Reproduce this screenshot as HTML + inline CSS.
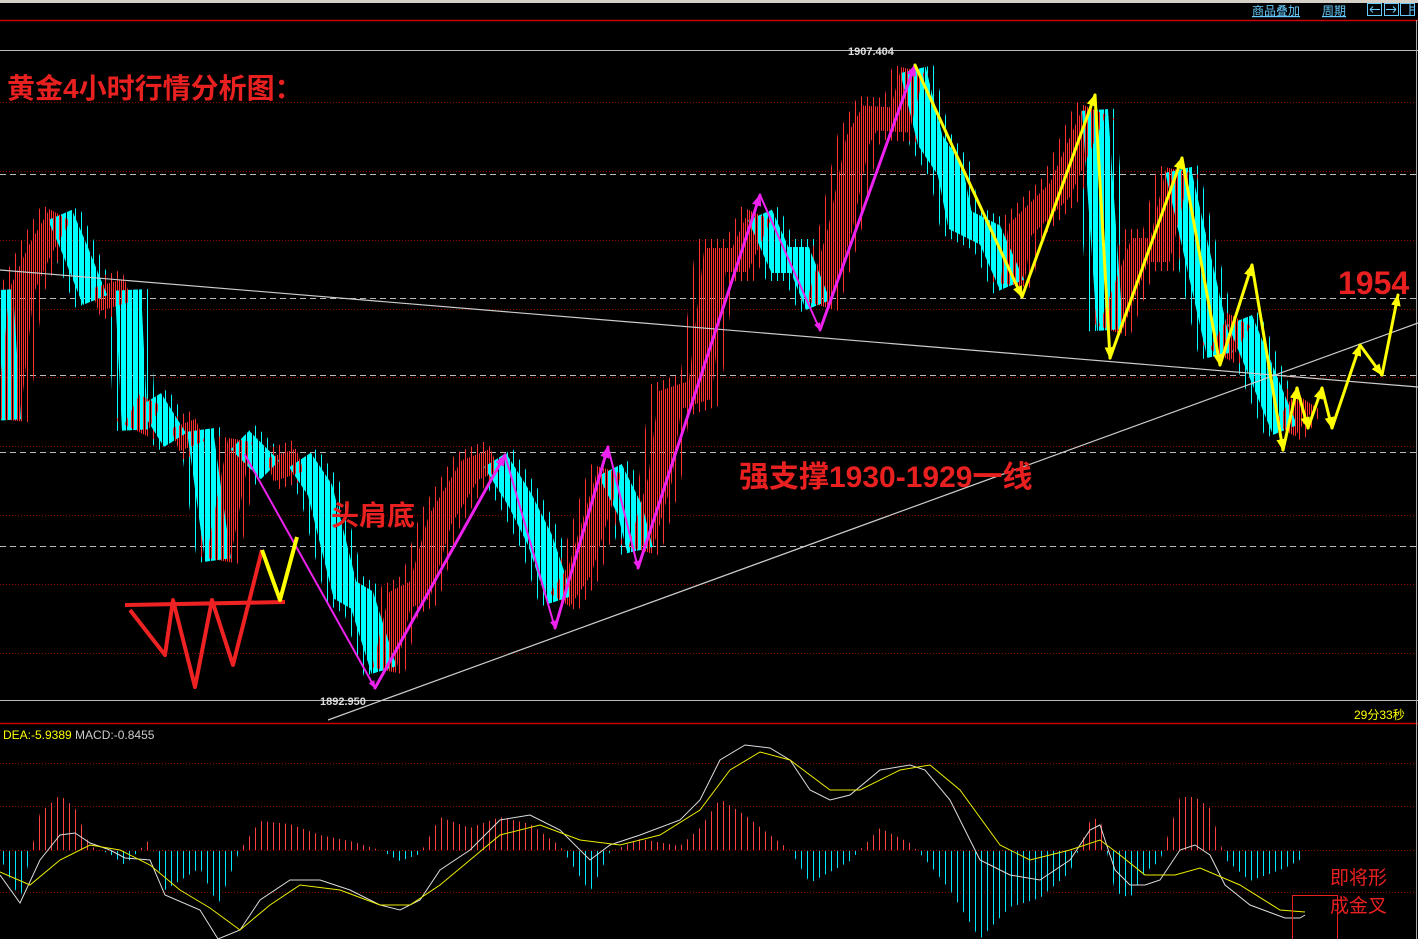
<!DOCTYPE html>
<html><head><meta charset="utf-8"><style>
html,body{margin:0;padding:0;background:#000;width:1418px;height:939px;overflow:hidden}
svg{display:block}
text{font-family:"Liberation Sans","Noto Sans CJK SC",sans-serif}
</style></head><body>
<svg width="1418" height="939" xmlns="http://www.w3.org/2000/svg">
<defs>
<pattern id="cyB" patternUnits="userSpaceOnUse" x="1" y="0" width="6" height="4"><rect x="0" y="0" width="5" height="4" fill="#00ffff"/></pattern>
<pattern id="cyW" patternUnits="userSpaceOnUse" x="1" y="0" width="6" height="4"><rect x="2" y="0" width="1" height="4" fill="#00ffff"/></pattern>
<pattern id="rdB" patternUnits="userSpaceOnUse" x="1" y="0" width="6" height="4"><rect x="0" y="0" width="1" height="4" fill="#ff3030"/><rect x="4" y="0" width="1" height="4" fill="#ff3030"/></pattern>
<pattern id="rdW" patternUnits="userSpaceOnUse" x="1" y="0" width="6" height="4"><rect x="2" y="0" width="1" height="4" fill="#ff3030"/></pattern>
<pattern id="hR" patternUnits="userSpaceOnUse" x="3" y="0" width="6" height="4"><rect x="0" y="0" width="1" height="4" fill="#ff4040"/></pattern>
<pattern id="hC" patternUnits="userSpaceOnUse" x="3" y="0" width="6" height="4"><rect x="0" y="0" width="1" height="4" fill="#00e5ff"/></pattern>
<clipPath id="up"><rect x="0" y="724" width="1418" height="126"/></clipPath>
<clipPath id="dn"><rect x="0" y="851" width="1418" height="90"/></clipPath>
<path id="cyP" fill="none" d="M0 290L8 420 M60 215L75 250L95 300 M128 290L135 430 M150 400L175 440 M200 430L218 560 M240 440L270 470 M300 460L320 490L345 590L362 600L384 670 M495 460L520 500L540 540L560 600 M610 470L630 510L640 550 M760 215L780 260L800 260L818 305 M913 70L930 140L950 170L960 220L990 235L1012 285 M1095 110L1110 330 M1178 170L1220 355 M1240 320L1285 430"/>
<path id="rdP" fill="none" d="M8 420L22 290L40 250L60 215 M95 300L128 290 M135 430L150 400 M175 440L200 430 M218 560L240 440 M270 470L300 460 M384 670L400 600L420 590L440 520L470 470L495 460 M560 600L580 570L610 470 M640 550L660 480L670 400L700 390L715 260L740 260L760 215 M818 305L840 230L858 140L870 118L900 120L913 70 M1012 285L1020 230L1060 190L1095 110 M1110 330L1140 250L1160 250L1178 170 M1220 355L1240 320 M1285 430L1305 400"/>
<marker id="am" viewBox="0 0 10 10" refX="9" refY="5" markerWidth="4" markerHeight="4" markerUnits="strokeWidth" orient="auto"><path d="M0 1L10 5L0 9z" fill="#ee22ee"/></marker>
<marker id="ay" viewBox="0 0 10 10" refX="9" refY="5" markerWidth="4" markerHeight="4" markerUnits="strokeWidth" orient="auto"><path d="M0 1L10 5L0 9z" fill="#ffff00"/></marker>
<polygon id="histP" points="0,850 0,857 20,900 40,813 60,795 75,808 90,846 110,854 125,865 150,839 165,890 200,868 218,905 240,850 260,821 290,824 320,835 350,841 380,850 400,861 420,854 440,817 470,828 500,817 530,824 560,846 590,892 610,852 640,839 680,846 700,828 720,799 745,815 770,835 790,850 810,883 830,872 850,861 880,828 910,843 925,859 950,890 980,939 1010,907 1040,898 1070,872 1090,821 1100,817 1115,892 1130,898 1145,872 1160,861 1180,797 1195,797 1210,808 1225,859 1250,881 1285,868 1305,857 1305,850"/>
</defs>
<rect width="1418" height="939" fill="#000"/>
<rect x="0" y="0" width="1418" height="3" fill="#d4d0c8"/>
<line x1="0" y1="20.5" x2="1418" y2="20.5" stroke="#c00" stroke-width="1.5"/>
<line x1="0" y1="50.5" x2="1418" y2="50.5" stroke="#bbb"/>
<line x1="0" y1="700.5" x2="1418" y2="700.5" stroke="#bbb"/>
<line x1="0" y1="723.5" x2="1418" y2="723.5" stroke="#c00" stroke-width="1.5"/>
<line x1="1416.5" y1="20" x2="1416.5" y2="939" stroke="#aaa"/>
<path stroke="#8a0000" stroke-dasharray="1 2" d="M0 102.5H1416M0 171.5H1416M0 240.5H1416M0 309.5H1416M0 377.5H1416M0 446.5H1416M0 515.5H1416M0 584.5H1416M0 653.5H1416M0 763.5H1416M0 806.5H1416M0 850.5H1416M0 892.5H1416"/>
<path stroke="#bbb" stroke-dasharray="6 4" d="M0 174.5H1416M0 298.5H1416M0 375.5H1416M0 452.5H1416M0 546.5H1416"/>
<!-- candles -->
<use href="#cyP" stroke="url(#cyW)" stroke-width="42"/>
<use href="#rdP" stroke="url(#rdW)" stroke-width="42"/>
<use href="#cyP" stroke="url(#cyB)" stroke-width="26"/>
<use href="#rdP" stroke="url(#rdB)" stroke-width="24"/>
<!-- MACD histogram -->
<g clip-path="url(#up)"><use href="#histP" fill="url(#hR)"/></g>
<g clip-path="url(#dn)"><use href="#histP" fill="url(#hC)"/></g>
<polyline fill="none" stroke="#ddd" stroke-width="1" points="0,875 20,903 40,860 60,835 75,833 90,843 110,850 125,858 150,860 165,895 200,910 218,939 240,930 260,900 290,880 320,880 350,890 380,905 400,910 420,900 440,870 470,850 500,820 530,815 560,830 590,860 610,845 640,835 680,820 700,800 720,760 745,745 770,748 790,760 810,790 830,800 850,795 880,770 910,765 925,770 950,800 980,860 1010,875 1040,880 1070,860 1090,830 1100,825 1115,870 1130,885 1145,885 1160,880 1180,850 1195,845 1210,855 1225,885 1250,905 1285,918 1300,918 1305,915"/>
<polyline fill="none" stroke="#ee0" stroke-width="1" points="0,872 30,885 60,860 90,845 120,850 150,865 180,890 210,908 240,930 270,905 300,885 340,890 380,905 410,905 440,885 470,860 500,835 540,825 580,840 620,845 660,835 700,810 730,770 760,752 790,760 830,790 860,790 900,770 930,765 960,790 1000,845 1030,860 1070,850 1100,840 1120,855 1145,875 1175,875 1200,868 1240,885 1280,910 1305,912"/>
<!-- trend lines -->
<line x1="0" y1="270" x2="1418" y2="387" stroke="#ccc" stroke-width="1.2"/>
<line x1="328" y1="720" x2="1418" y2="323" stroke="#ccc" stroke-width="1.2"/>
<!-- annotations -->
<g stroke="#ee22ee" stroke-linecap="round" marker-end="url(#am)">
<line x1="245" y1="455" x2="375" y2="688" stroke-width="2"/>
<line x1="375" y1="688" x2="505" y2="455" stroke-width="3"/>
<line x1="505" y1="455" x2="555" y2="628" stroke-width="2"/>
<line x1="555" y1="628" x2="608" y2="447" stroke-width="3"/>
<line x1="608" y1="447" x2="638" y2="568" stroke-width="2"/>
<line x1="638" y1="568" x2="760" y2="195" stroke-width="3"/>
<line x1="760" y1="195" x2="820" y2="330" stroke-width="2"/>
<line x1="820" y1="330" x2="915" y2="65" stroke-width="3"/>
</g>
<g stroke="#ffff00" stroke-width="3" stroke-linecap="round" marker-end="url(#ay)">
<line x1="915" y1="65" x2="1022" y2="297"/>
<line x1="1022" y1="297" x2="1095" y2="95"/>
<line x1="1095" y1="95" x2="1110" y2="358"/>
<line x1="1110" y1="358" x2="1182" y2="158"/>
<line x1="1182" y1="158" x2="1220" y2="365"/>
<line x1="1220" y1="365" x2="1252" y2="265"/>
<line x1="1252" y1="265" x2="1283" y2="450"/>
<line x1="1283" y1="450" x2="1297" y2="388"/>
<line x1="1297" y1="388" x2="1308" y2="428"/>
<line x1="1308" y1="428" x2="1322" y2="388"/>
<line x1="1322" y1="388" x2="1332" y2="428"/>
<line x1="1332" y1="428" x2="1360" y2="345"/>
<line x1="1360" y1="345" x2="1382" y2="375"/>
<line x1="1382" y1="375" x2="1398" y2="295"/>
</g>
<polyline fill="none" stroke="#ee2222" stroke-width="4" points="125,605 285,602"/>
<polyline fill="none" stroke="#ee2222" stroke-width="4" stroke-linejoin="round" points="130,610 165,655 173,600 195,687 212,600 233,665 262,550"/>
<polyline fill="none" stroke="#ffff00" stroke-width="4" stroke-linejoin="round" points="262,550 280,600 297,537"/>
<!-- toolbar -->
<text x="1252" y="15" font-size="12" fill="#6cf" text-decoration="underline">商品叠加</text>
<text x="1322" y="15" font-size="12" fill="#6cf" text-decoration="underline">周期</text>
<rect x="1367.5" y="3.5" width="14" height="12" fill="none" stroke="#6cf"/>
<rect x="1384.5" y="3.5" width="14" height="12" fill="none" stroke="#6cf"/>
<rect x="1400.5" y="3.5" width="14" height="12" fill="none" stroke="#6cf"/>
<path d="M1370 9.5h10M1370 9.5l3-3M1370 9.5l3 3M1396 9.5h-10M1396 9.5l-3-3M1396 9.5l-3 3M1410 4v11M1410 7h4M1410 10h4" stroke="#6cf" fill="none"/>
<text x="848" y="55" font-size="11" font-weight="bold" fill="#ddd">1907.404</text>
<text x="320" y="705" font-size="11" font-weight="bold" fill="#ddd">1892.950</text>
<text x="1354" y="719" font-size="12" fill="#ff0">29分33秒</text>
<text x="3" y="739" font-size="12" fill="#ff0">DEA:-5.9389 <tspan fill="#ccc">MACD:-0.8455</tspan></text>
<text x="7" y="98" font-size="28" font-weight="bold" fill="#e82020">黄金4小时行情分析图：</text>
<text x="331" y="525" font-size="28" font-weight="bold" fill="#e82020">头肩底</text>
<text x="739" y="487" font-size="30" font-weight="bold" fill="#e82020">强支撑1930-1929一线</text>
<text x="1338" y="294" font-size="32" font-weight="bold" fill="#e82020">1954</text>
<text x="1330" y="884" font-size="19" fill="#e82020">即将形</text>
<text x="1330" y="912" font-size="19" fill="#e82020">成金叉</text>
<rect x="1292.5" y="895.5" width="45" height="44" fill="none" stroke="#e82020"/>
</svg>
</body></html>
